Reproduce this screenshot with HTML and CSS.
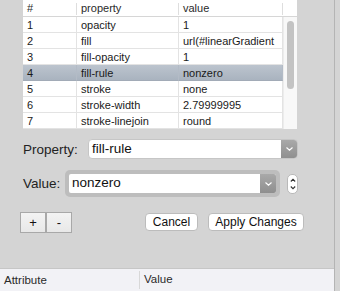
FILE: index.html
```html
<!DOCTYPE html>
<html lang="en">
<head>
  <meta charset="UTF-8" />
  <title>Style properties</title>
  <link rel="stylesheet" href="styles.css">
</head>
<body>
  <div class="window">
    <div class="panel">
      <div class="grid">
        <div class="hd">#</div>
        <div class="hd">property</div>
        <div class="hd">value</div>
        <div class="hd corner"></div>
        <div class="scroll"><div class="thumb"></div></div>

        <div class="cell">1</div><div class="cell">opacity</div><div class="cell">1</div>
        <div class="cell">2</div><div class="cell">fill</div><div class="cell">url(#linearGradient</div>
        <div class="cell">3</div><div class="cell">fill-opacity</div><div class="cell">1</div>
        <div class="cell sel">4</div><div class="cell sel">fill-rule</div><div class="cell sel">nonzero</div>
        <div class="cell">5</div><div class="cell">stroke</div><div class="cell">none</div>
        <div class="cell">6</div><div class="cell">stroke-width</div><div class="cell">2.79999995</div>
        <div class="cell">7</div><div class="cell">stroke-linejoin</div><div class="cell">round</div>
      </div>

      <div class="field prop-field">
        <label class="lbl prop-lbl">Property:</label>
        <div class="select">
          <span class="select-text">fill-rule</span>
          <span class="arrow">
            <svg width="7" height="4" viewBox="0 0 7 4"><path d="M0.5 0.5 L3.5 3.2 L6.5 0.5" fill="none" stroke="#fff" stroke-width="1.2"/></svg>
          </span>
        </div>
      </div>

      <div class="field value-field">
        <label class="lbl value-lbl">Value:</label>
        <div class="combo">
          <div class="combo-inner">
            <span class="select-text">nonzero</span>
            <span class="arrow">
              <svg width="7" height="4" viewBox="0 0 7 4"><path d="M0.5 0.5 L3.5 3.2 L6.5 0.5" fill="none" stroke="#fff" stroke-width="1.2"/></svg>
            </span>
          </div>
        </div>
        <div class="stepper">
          <svg width="6" height="14" viewBox="0 0 6 14"><path d="M0.8 4.5 L3 2.3 L5.2 4.5" fill="none" stroke="#333" stroke-width="1.1"/><path d="M0.8 9.5 L3 11.7 L5.2 9.5" fill="none" stroke="#333" stroke-width="1.1"/></svg>
        </div>
      </div>

      <div class="actions">
        <button class="pm">+</button>
        <button class="pm">-</button>
        <button class="btn cancel">Cancel</button>
        <button class="btn apply">Apply Changes</button>
      </div>
    </div>

    <div class="attr-bar">
      <div class="attr-col attr-name">Attribute</div>
      <div class="attr-col">Value</div>
    </div>
  </div>
</body>
</html>
```

FILE: styles.css
```css
body {
  margin: 0;
  background-color: #d4d4d4;
  font-family: "Liberation Sans", Arial, sans-serif;
  color: #1a1a1a;
}
.window {
  width: 334px;
  height: 291px;
  border-right: 1px solid #b4b4b4;
  display: flex;
  flex-direction: column;
}
.panel {
  height: 269px;
  overflow: hidden;
}

/* tabla de propiedades */
.grid {
  display: grid;
  grid-template-columns: 54px 102px 104px 14px;
  width: 274px;
  margin-left: 23px;
  background: #fff;
  font-size: 11px;
}
.hd {
  position: relative;
  height: 17px;
  line-height: 16px;
  padding-left: 4px;
  box-sizing: border-box;
  border-bottom: 1px solid #d6d6d6;
  color: #2a2a2a;
}
.hd::after {
  content: "";
  position: absolute;
  right: 0;
  top: 3px;
  height: 12px;
  border-right: 1px solid #dedede;
}
.hd.corner::after {
  display: none;
}
.cell {
  height: 16px;
  line-height: 16px;
  padding-left: 4px;
  box-sizing: border-box;
  border-bottom: 1px solid #e3e3e3;
  border-right: 1px solid #e3e3e3;
  white-space: nowrap;
  overflow: hidden;
}
.cell.sel {
  background: linear-gradient(#bcc4ce, #a9b3bf);
  border-bottom-color: #a2abb7;
  border-right-color: #b3bbc6;
}
.scroll {
  grid-column: 4;
  grid-row: 2 / span 7;
  background: #f8f8f8;
  border-left: 1px solid #ececec;
  padding-top: 4px;
  display: flex;
  justify-content: center;
}
.thumb {
  width: 7px;
  height: 68px;
  border-radius: 4px;
  background: #c3c3c3;
}

/* campos */
.field {
  display: flex;
  align-items: center;
  margin-left: 23px;
}
.lbl {
  font-size: 13.5px;
  color: #222;
}
.prop-field {
  margin-top: 10px;
}
.prop-lbl {
  width: 65px;
}
.value-field {
  margin-top: 11px;
}
.value-lbl {
  width: 42px;
}
.select {
  width: 210px;
  height: 20px;
  box-sizing: border-box;
  display: flex;
  background: #fff;
  border: 1px solid #c6c6c6;
  border-radius: 4px;
  overflow: hidden;
}
.select-text {
  flex: 1;
  padding-left: 3px;
  font-size: 13.5px;
  line-height: 18px;
  color: #111;
}
.arrow {
  width: 16px;
  display: flex;
  align-items: center;
  justify-content: center;
  background: linear-gradient(#a9a9a9, #8f8f8f);
}
.combo {
  width: 215px;
  height: 27px;
  box-sizing: border-box;
  padding: 4px;
  background: #bdbdbd;
  border-radius: 5px;
}
.combo-inner {
  height: 19px;
  display: flex;
  background: #fff;
  border-radius: 2px;
  overflow: hidden;
}
.stepper {
  width: 11px;
  height: 20px;
  margin-left: 7px;
  box-sizing: border-box;
  background: #fff;
  border: 1px solid #b9b9b9;
  border-radius: 5px;
  display: flex;
  align-items: center;
  justify-content: center;
}

/* botones */
.actions {
  display: flex;
  align-items: flex-start;
  margin-top: 15px;
  margin-left: 20px;
}
.pm {
  width: 26px;
  height: 21px;
  margin: 0;
  padding: 0;
  border: 1px solid #a8a8a8;
  background: linear-gradient(#f3f3f3, #e8e8e8);
  font-family: "Liberation Sans", Arial, sans-serif;
  font-size: 13px;
  line-height: 18px;
  color: #111;
}
.btn {
  height: 18px;
  margin: 1px 0 0 0;
  padding: 0;
  background: #fff;
  border: 1px solid #bcbcbc;
  border-radius: 4px;
  font-family: "Liberation Sans", Arial, sans-serif;
  font-size: 12px;
  line-height: 15px;
  color: #111;
}
.cancel {
  width: 53px;
  margin-left: 73px;
}
.apply {
  width: 96px;
  margin-left: 10px;
}

/* barra inferior */
.attr-bar {
  flex: 1;
  display: flex;
  background: #f2f2f6;
  border-top: 1px solid #c6c6c6;
  font-size: 11.5px;
  color: #2a2a2a;
}
.attr-col {
  padding-left: 4px;
  line-height: 20px;
}
.attr-name {
  width: 135px;
  border-right: 1px solid #d8d8d8;
  margin: 2px 0;
  line-height: 18px;
}
```
